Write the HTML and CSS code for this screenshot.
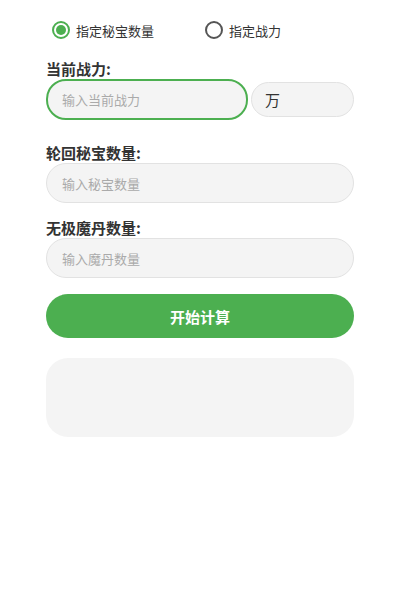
FILE: index.html
```html
<!DOCTYPE html>
<html lang="zh-CN">
<head>
  <meta charset="UTF-8" />
  <meta name="viewport" content="width=device-width, initial-scale=1.0" />
  <title>秘宝计算</title>
  <link rel="stylesheet" href="styles.css">
</head>
<body>

<div class="calc">
  <div class="mode-row">
    <label class="radio checked"><span class="dot"></span>指定秘宝数量</label>
    <label class="radio"><span class="dot"></span>指定战力</label>
  </div>

  <div class="group first">
    <div class="label">当前战力:</div>
    <div class="power-row">
      <input type="text" class="field focus" placeholder="输入当前战力" />
      <div class="unit">万</div>
    </div>
  </div>

  <div class="group second">
    <div class="label">轮回秘宝数量:</div>
    <input type="text" class="field" placeholder="输入秘宝数量" />
  </div>

  <div class="group">
    <div class="label">无极魔丹数量:</div>
    <input type="text" class="field" placeholder="输入魔丹数量" />
  </div>

  <button class="go">开始计算</button>

  <div class="result"></div>
</div>

</body>
</html>
```

FILE: styles.css
```css
body {
  margin: 0;
  padding: 0;
  background: #fff;
  font-family: "Noto Sans CJK SC", "Noto Sans", sans-serif;
  color: #333;
}

.calc {
  padding: 20px 46px;
}

.mode-row {
  display: flex;
  gap: 51px;
  padding-left: 6px;
  height: 20px;
  align-items: center;
}

.radio {
  display: flex;
  align-items: center;
  gap: 6px;
  font-size: 13px;
  color: #333;
}

.dot {
  width: 18px;
  height: 18px;
  box-sizing: border-box;
  border: 2px solid #555;
  border-radius: 50%;
  position: relative;
}

.radio.checked .dot {
  border-color: #4caf50;
}

.radio.checked .dot::after {
  content: "";
  position: absolute;
  left: 2px;
  top: 2px;
  width: 10px;
  height: 10px;
  border-radius: 50%;
  background: #4caf50;
}

.group {
  margin-top: 15px;
}

.group.first {
  margin-top: 19px;
}

.group.second {
  margin-top: 23px;
}

.label {
  font-size: 15px;
  font-weight: bold;
  line-height: 20px;
  color: #333;
}

.power-row {
  display: flex;
  align-items: center;
  gap: 3px;
}

.field {
  display: block;
  width: 100%;
  height: 40px;
  box-sizing: border-box;
  padding: 0 15px;
  font-family: inherit;
  font-size: 13px;
  color: #333;
  background: #f4f4f4;
  border: 1px solid #e2e2e2;
  border-radius: 20px;
  outline: none;
}

.field::placeholder {
  color: #aaa;
}

.field.focus {
  flex: none;
  width: 202px;
  height: 41px;
  padding: 0 14px;
  border: 2px solid #4caf50;
}

.unit {
  flex: 1;
  height: 35px;
  box-sizing: border-box;
  padding-left: 13px;
  display: flex;
  align-items: center;
  font-size: 15px;
  background: #f4f4f4;
  border: 1px solid #e2e2e2;
  border-radius: 18px;
}

.go {
  display: block;
  width: 100%;
  height: 44px;
  margin-top: 16px;
  border: none;
  border-radius: 22px;
  background: #4caf50;
  color: #fff;
  font-family: inherit;
  font-size: 15px;
  font-weight: bold;
}

.result {
  margin-top: 20px;
  height: 79px;
  background: #f4f4f4;
  border-radius: 22px;
}
```
